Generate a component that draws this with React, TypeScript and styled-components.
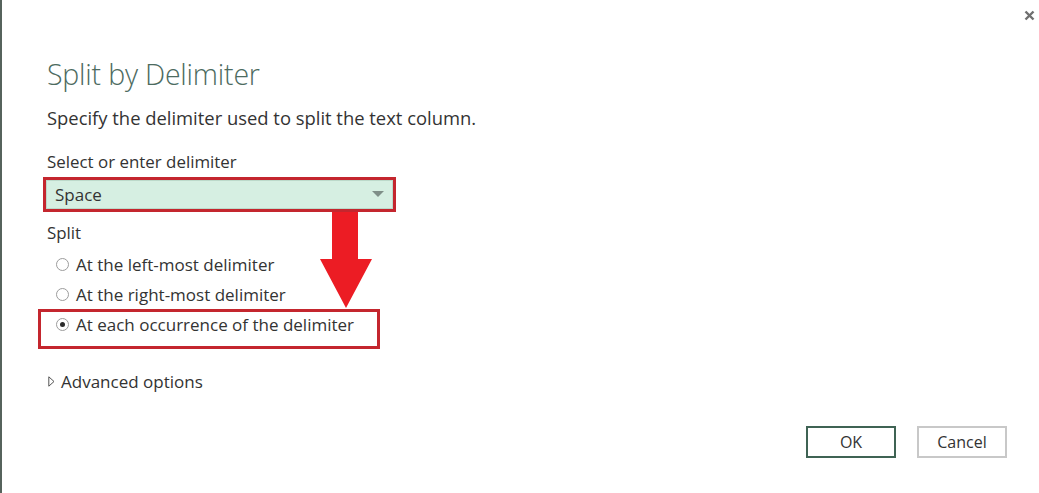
import React from "react";
import styled, { createGlobalStyle } from "styled-components";

const GlobalStyle = createGlobalStyle`
  html, body {
    margin: 0;
    padding: 0;
    background: #ffffff;
  }
  body {
    font-family: "Open Sans", "Noto Sans", "Liberation Sans", sans-serif;
    color: #333333;
  }
`;

const Dialog = styled.div`
  position: relative;
  width: 1039px;
  height: 493px;
  box-sizing: border-box;
  border-left: 2px solid #56635c;
  background: #ffffff;
  display: flex;
  flex-direction: column;
  overflow: hidden;
`;

const TopBar = styled.div`
  display: flex;
  justify-content: flex-end;
  height: 30px;
  padding: 8px 3px 0 0;
  box-sizing: border-box;
`;

const CloseButton = styled.button`
  width: 14px;
  height: 14px;
  padding: 0;
  border: none;
  background: transparent;
  display: flex;
  align-items: center;
  justify-content: center;
  cursor: pointer;
`;

const Body = styled.div`
  display: flex;
  flex-direction: column;
  padding: 0 0 0 45px;
  flex: 1;
`;

const Title = styled.h1`
  margin: 24px 0 0 0;
  font-size: 28.5px;
  font-weight: 300;
  color: #4d6b5f;
  line-height: 40px;
  letter-spacing: -0.2px;
`;

const Description = styled.p`
  margin: 12px 0 0 0;
  font-size: 18.4px;
  line-height: 24px;
  color: #333333;
`;

const Label = styled.div<{ $top: number }>`
  margin: ${(p) => p.$top}px 0 0 0;
  font-size: 16.9px;
  line-height: 22px;
  color: #333333;
`;

const Highlight = styled.div<{ $width: number; $padBottom?: number }>`
  width: ${(p) => p.$width}px;
  box-sizing: border-box;
  border: 3px solid #c4262e;
  padding-bottom: ${(p) => p.$padBottom ?? 0}px;
`;

const SelectBox = styled.div`
  height: 29px;
  background: #d6efe2;
  border: 1px solid #bcd9ca;
  box-sizing: border-box;
  display: flex;
  align-items: center;
  justify-content: space-between;
  padding: 0 8px 0 8px;
  font-size: 17px;
  color: #333333;
`;

const Caret = styled.span`
  width: 0;
  height: 0;
  border-left: 6px solid transparent;
  border-right: 6px solid transparent;
  border-top: 6px solid #7f8f88;
  margin-bottom: 2px;
`;

const RadioList = styled.div`
  display: flex;
  flex-direction: column;
  margin-top: 5px;
`;

const RadioRow = styled.label<{ $height?: number; $indent?: number }>`
  display: flex;
  align-items: center;
  gap: 7px;
  height: ${(p) => p.$height ?? 30}px;
  padding-left: ${(p) => p.$indent ?? 9}px;
  font-size: 17px;
  color: #333333;
  cursor: pointer;
`;

const RadioCircle = styled.span<{ $checked?: boolean }>`
  width: 13px;
  height: 13px;
  box-sizing: border-box;
  border-radius: 50%;
  border: 1px solid #9c9c9c;
  background: #ffffff;
  display: flex;
  align-items: center;
  justify-content: center;
  &::after {
    content: "";
    width: 5px;
    height: 5px;
    border-radius: 50%;
    background: ${(p) => (p.$checked ? "#2b2b2b" : "transparent")};
  }
`;

const AdvancedToggle = styled.div`
  display: flex;
  align-items: center;
  gap: 6px;
  margin-top: 17px;
  height: 30px;
  font-size: 17px;
  color: #333333;
  padding-left: 1px;
`;

const Footer = styled.div`
  display: flex;
  justify-content: flex-end;
  gap: 21px;
  padding: 0 32px 0 0;
  margin-top: 30px;
`;

const Button = styled.button<{ $primary?: boolean }>`
  width: 90px;
  height: 32px;
  box-sizing: border-box;
  background: #ffffff;
  border: 2px solid ${(p) => (p.$primary ? "#3f6354" : "#c8c8c8")};
  font-family: inherit;
  font-size: 16px;
  color: #333333;
  cursor: pointer;
`;

const ArrowOverlay = styled.svg`
  position: absolute;
  left: 316px;
  top: 212px;
`;

function SplitByDelimiter() {
  return (
    <Dialog>
      <TopBar>
        <CloseButton aria-label="Close">
          <svg width="11" height="11" viewBox="0 0 11 11">
            <path d="M1.5 1.5 L9.5 9.5 M9.5 1.5 L1.5 9.5" stroke="#6f6f6f" strokeWidth="2.4" />
          </svg>
        </CloseButton>
      </TopBar>
      <Body>
        <Title>Split by Delimiter</Title>
        <Description>Specify the delimiter used to split the text column.</Description>
        <Label $top={21}>Select or enter delimiter</Label>
        <Highlight $width={353} style={{ marginLeft: -4, marginTop: 4 }}>
          <SelectBox>
            <span>Space</span>
            <Caret />
          </SelectBox>
        </Highlight>
        <Label $top={10}>Split</Label>
        <RadioList>
          <RadioRow>
            <RadioCircle />
            At the left-most delimiter
          </RadioRow>
          <RadioRow>
            <RadioCircle />
            At the right-most delimiter
          </RadioRow>
          <Highlight $width={342} $padBottom={10} style={{ marginLeft: -9 }}>
            <RadioRow $height={24} $indent={15}>
              <RadioCircle $checked />
              At each occurrence of the delimiter
            </RadioRow>
          </Highlight>
        </RadioList>
        <AdvancedToggle>
          <svg width="7" height="11" viewBox="0 0 7 11">
            <path d="M0.8 0.8 L6 5.5 L0.8 10.2 Z" fill="none" stroke="#555555" strokeWidth="1" />
          </svg>
          Advanced options
        </AdvancedToggle>
        <Footer>
          <Button $primary>OK</Button>
          <Button>Cancel</Button>
        </Footer>
      </Body>
      <ArrowOverlay width="56" height="97" viewBox="0 0 56 97">
        <path d="M14 0 H40 V47 H54 L28 96 L2 47 H14 Z" fill="#ec1c24" />
      </ArrowOverlay>
    </Dialog>
  );
}

export default function App() {
  return (
    <>
      <GlobalStyle />
      <SplitByDelimiter />
    </>
  );
}
